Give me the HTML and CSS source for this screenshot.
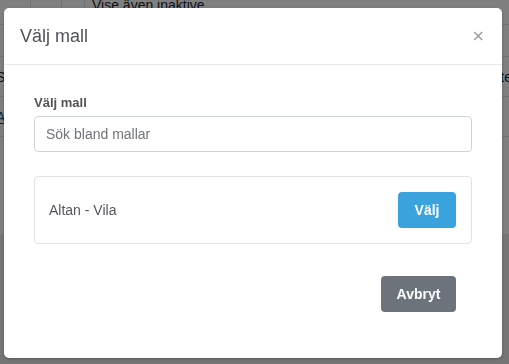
FILE: index.html
```html
<!DOCTYPE html>
<html lang="sv">
<head>
<meta charset="utf-8">
<title>Välj mall</title>
<link rel="stylesheet" href="styles.css">
</head>
<body>
<div class="page">
  <div class="row row-top">
    <div class="cell c1"></div>
    <div class="cell c2"></div>
    <div class="cell c3"></div>
    <div class="cell c4">Vise även inaktive</div>
  </div>
  <div class="row row-a"></div>
  <div class="row row-b">
    <span class="edge-l">S</span>
    <span class="edge-r">te</span>
  </div>
  <div class="row row-c">
    <span class="edge-l link">A</span>
  </div>
  <div class="page-rest"></div>
  <div class="page-foot"></div>
</div>

<div class="backdrop">
  <div class="modal">
    <div class="modal-header">
      <h5 class="modal-title">Välj mall</h5>
      <button class="close" type="button" aria-label="Stäng">×</button>
    </div>
    <div class="modal-body">
      <label class="field-label" for="search">Välj mall</label>
      <input id="search" class="field-input" type="text" placeholder="Sök bland mallar">
      <div class="template-card">
        <span class="template-name">Altan - Vila</span>
        <button class="btn btn-primary" type="button">Välj</button>
      </div>
      <div class="modal-footer">
        <button class="btn btn-secondary" type="button">Avbryt</button>
      </div>
    </div>
  </div>
</div>
</body>
</html>
```

FILE: styles.css
```css
* { box-sizing: border-box; }

html, body {
  margin: 0;
  padding: 0;
  height: 100%;
}

body {
  font-family: "Liberation Sans", Arial, sans-serif;
  color: #495057;
  background: #ebebeb;
  overflow: hidden;
}

/* background page */
.page {
  background: #ffffff;
  font-size: 14px;
  color: #212529;
}

.row {
  display: flex;
  border-bottom: 1px solid #dee2e6;
  position: relative;
}

.row-top { height: 25px; }
.row-a { height: 32px; }
.row-b { height: 40px; }
.row-c { height: 40px; }

.cell {
  border-right: 1px solid #dee2e6;
  height: 100%;
}
.c1 { width: 31px; }
.c2 { width: 31px; }
.c3 { width: 23px; }
.c4 {
  border-right: none;
  padding: 0 0 0 7px;
  line-height: 16px;
  margin-top: -3px;
}

.row-b, .row-c {
  justify-content: space-between;
  align-items: center;
}

.edge-l { margin-left: -4px; font-size: 14px; }
.edge-r { margin-right: -3px; font-size: 14px; }
.link { text-decoration: underline; color: #1a3c6e; }

.page-rest {
  height: 97px;
  background: #ffffff;
}

.page-foot {
  height: 120px;
  background: #ebebeb;
}

/* overlay */
.backdrop {
  position: fixed;
  inset: 0;
  background: rgba(0, 0, 0, 0.5);
  padding: 8px 0 0 4px;
}

.modal {
  width: 498px;
  height: 350px;
  background: #ffffff;
  border-radius: 5px;
  box-shadow: 0 1px 3px rgba(0, 0, 0, 0.25);
  display: flex;
  flex-direction: column;
}

.modal-header {
  display: flex;
  align-items: center;
  justify-content: space-between;
  padding: 16px 16px 16px 16px;
  border-bottom: 1px solid #e6e9ed;
  height: 57px;
}

.modal-title {
  margin: 0;
  font-size: 18px;
  line-height: 24px;
  font-weight: 400;
  color: #4f5357;
}

.close {
  border: none;
  background: transparent;
  padding: 0;
  margin: -1px 1px 0 0;
  font-family: "DejaVu Sans", sans-serif;
  font-size: 16px;
  line-height: 20px;
  color: #9a9a9a;
  cursor: pointer;
}

.modal-body {
  padding: 29px 30px 0 30px;
  display: flex;
  flex-direction: column;
  flex: 1;
}

.field-label {
  display: block;
  font-size: 13px;
  font-weight: 700;
  line-height: 18px;
  margin-bottom: 4px;
  color: #4f5357;
}

.field-input {
  display: block;
  width: 100%;
  height: 36px;
  border: 1px solid #ced4da;
  border-radius: 4px;
  padding: 0 11px;
  font-family: "Liberation Sans", Arial, sans-serif;
  font-size: 14px;
  color: #495057;
  outline: none;
}

.field-input::placeholder {
  color: #6f747a;
  opacity: 1;
}

.template-card {
  margin-top: 24px;
  height: 68px;
  border: 1px solid #dee2e6;
  border-radius: 4px;
  padding: 0 15px 0 14px;
  display: flex;
  align-items: center;
  justify-content: space-between;
}

.template-name {
  font-size: 14px;
  color: #53575b;
}

.btn {
  height: 36px;
  border: none;
  border-radius: 4px;
  font-family: "Liberation Sans", Arial, sans-serif;
  font-size: 14px;
  font-weight: 700;
  color: #ffffff;
  cursor: pointer;
}

.btn-primary {
  width: 58px;
  background: #3aa3de;
}

.btn-secondary {
  width: 75px;
  background: #6c737a;
}

.modal-footer {
  display: flex;
  justify-content: flex-end;
  padding: 32px 16px 0 0;
}
```
